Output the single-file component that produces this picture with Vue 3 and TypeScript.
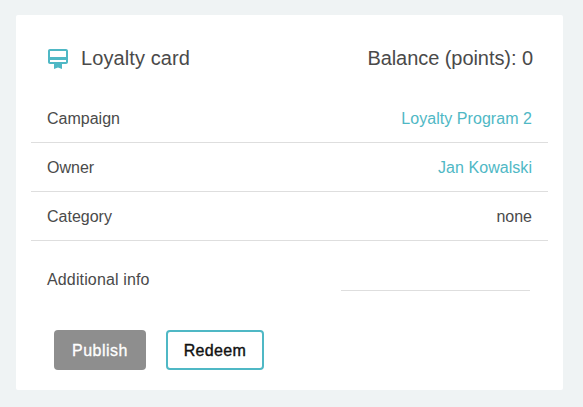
<script setup lang="ts">
interface Detail {
  label: string
  value: string
  link: boolean
}

const details: Detail[] = [
  { label: 'Campaign', value: 'Loyalty Program 2', link: true },
  { label: 'Owner', value: 'Jan Kowalski', link: true },
  { label: 'Category', value: 'none', link: false },
]

const balance = 0
</script>

<template>
  <main class="page">
    <section class="card">
      <header class="head">
        <svg class="icon" viewBox="0 0 24 24" width="24" height="24">
          <path
            d="M20 2H4c-1.11 0-2 .89-2 2v11c0 1.11.89 2 2 2h4v5l4-1.5 4 1.5v-5h4c1.11 0 2-.89 2-2V4c0-1.11-.89-2-2-2zm0 13H4v-2h16v2zm0-5H4V4h16v6z"
          />
        </svg>
        <h1 class="title">Loyalty card</h1>
        <span class="balance">Balance (points): {{ balance }}</span>
      </header>
      <div v-for="item in details" :key="item.label" class="row">
        <span>{{ item.label }}</span>
        <span :class="{ link: item.link }">{{ item.value }}</span>
      </div>
      <div class="info">
        <span class="info-label">Additional info</span>
        <span class="field"></span>
      </div>
      <div class="actions">
        <button class="btn publish" type="button">Publish</button>
        <button class="btn redeem" type="button">Redeem</button>
      </div>
    </section>
  </main>
</template>

<style>
body {
  background: #eff3f4;
}
</style>

<style scoped>
.page {
  box-sizing: border-box;
  height: 407px;
  padding: 15px 20px 17px 16px;
  background: #eff3f4;
  font-family: "Liberation Sans", Arial, sans-serif;
  font-size: 16px;
  color: #4a4a4a;
}
.card {
  box-sizing: border-box;
  height: 375px;
  padding: 0 15px;
  background: #fff;
  border-radius: 2px;
}
.head {
  display: flex;
  align-items: center;
  height: 79px;
  padding: 8px 15px 0;
  box-sizing: border-box;
}
.icon {
  margin-top: 1px;
  fill: #4fb8c5;
}
.title {
  margin: 0 0 0 11px;
  font-size: 20px;
  font-weight: 400;
  letter-spacing: 0.1px;
}
.balance {
  margin-left: auto;
  font-size: 20px;
  letter-spacing: -0.06px;
}
.row {
  display: flex;
  align-items: center;
  justify-content: space-between;
  box-sizing: border-box;
  height: 49px;
  padding: 2px 16px 0;
  border-bottom: 1px solid #dedede;
}
.link {
  color: #4fb8c5;
  letter-spacing: 0.05px;
}
.info {
  display: flex;
  align-items: center;
  justify-content: space-between;
  height: 78px;
  padding: 0 18px 0 16px;
}
.info-label {
  letter-spacing: 0.14px;
}
.field {
  width: 189px;
  height: 20px;
  border-bottom: 1px solid #dedede;
}
.actions {
  display: flex;
  gap: 20px;
  padding: 11px 23px 0;
}
.btn {
  box-sizing: border-box;
  height: 40px;
  padding: 2px 0 0;
  border: 0;
  border-radius: 4px;
  font-family: inherit;
  font-size: 16px;
}
.publish {
  width: 92px;
  background: #8e8e8e;
  color: #fff;
  letter-spacing: 0.5px;
  -webkit-text-stroke: 0.3px #fff;
}
.redeem {
  width: 98px;
  background: #fff;
  border: 2px solid #4fb8c5;
  color: #111;
  letter-spacing: 0.35px;
  -webkit-text-stroke: 0.4px #111;
}
</style>
